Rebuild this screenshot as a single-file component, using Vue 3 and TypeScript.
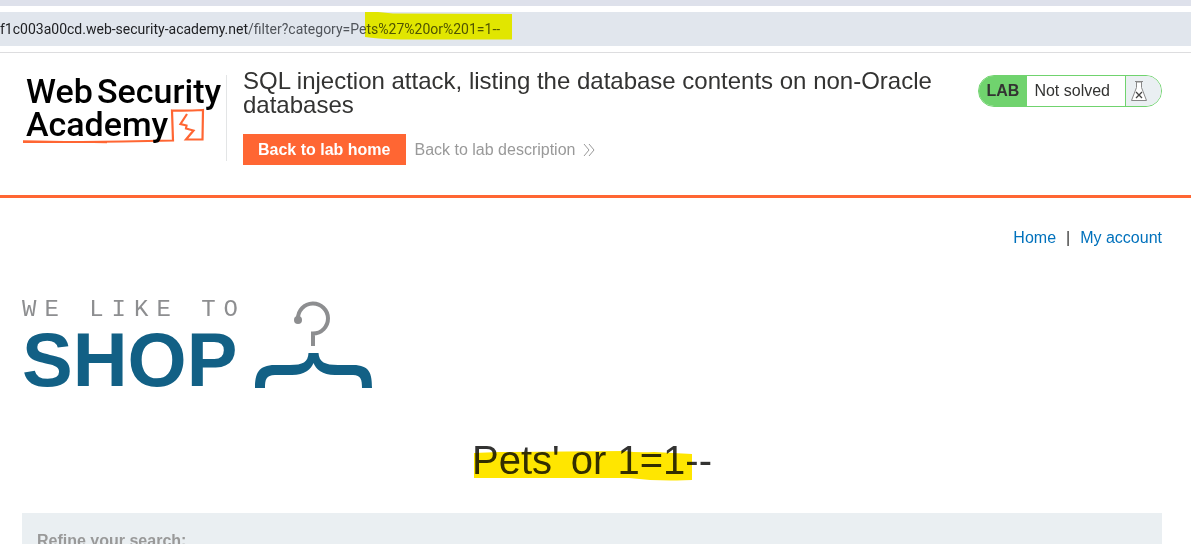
<script setup lang="ts">
const host = 'f1c003a00cd.web-security-academy.net'
const path = '/filter?category=Pet'
const injected = 's%27%20or%201=1--'
const title = 'SQL injection attack, listing the database contents on non-Oracle databases'
const status = 'Not solved'
</script>

<template>
  <div class="window">
    <div class="chrome">
      <div class="address">
        <span class="host">{{ host }}</span><span>{{ path }}</span><span class="marked">{{ injected }}<svg class="url-marker" viewBox="0 0 147 28" width="147" height="28" aria-hidden="true"><path d="M0 0L13 0L28 1.5L147 2V27.500L36 27.500Q16 27 0 25Z" fill="#ff0" /></svg></span>
      </div>
    </div>

    <header class="lab-header">
      <a class="logo" href="#" aria-label="Web Security Academy">
        <svg viewBox="0 0 204 86" width="204" height="86">
          <path d="M1 67L60 67L100 66.500L151 65.500L150 35.500Q165 36 181 35L180.500 64.500L164 64.500L171.500 55.500L164 53.500L164.500 50.500L158.500 49L165 39" fill="none" stroke="#ff6633" stroke-width="2.200" />
          <path d="M1 66L85 67.500" fill="none" stroke="#ff6633" stroke-width="1.500" />
          <g class="logo-text">
            <text x="4" y="28">Web</text>
            <text x="75" y="28">Security</text>
            <text x="4" y="61">Academy</text>
          </g>
        </svg>
      </a>
      <div class="title-block">
        <h2>{{ title }}</h2>
        <div class="actions">
          <a class="primary" href="#">Back to lab home</a>
          <a class="secondary" href="#">
            Back to lab description
            <svg viewBox="0 0 12 14" width="12" height="14" aria-hidden="true"><path d="M1 1L6 7L1 13M6 1L11 7L6 13" fill="none" stroke="#999" stroke-width="1" /></svg>
          </a>
        </div>
      </div>
      <div class="lab-status">
        <span class="tag">LAB</span>
        <span class="state">{{ status }}</span>
        <span class="flask">
          <svg viewBox="0 0 18 22" width="18" height="22" aria-hidden="true">
            <path d="M6.500 2V7.500L1.500 20.500H16.500L11.500 7.500V2Z" fill="#fff" stroke="#888" />
            <path d="M5 1.500H13" stroke="#888" />
            <path d="M6 12L12 18M12 12L6 18" stroke="#444" stroke-width="1.300" />
          </svg>
        </span>
      </div>
    </header>

    <main>
      <nav>
        <a href="#">Home</a><span>|</span><a href="#">My account</a>
      </nav>
      <div class="shop-logo">
        <div class="words">
          <span class="tagline">WE LIKE TO</span>
          <span class="shop">SHOP</span>
        </div>
        <svg viewBox="0 0 118 90" width="118" height="90" aria-hidden="true">
          <path d="M43 19A15 15 0 1 1 58 33.500V46" fill="none" stroke="#8d8e90" stroke-width="4" />
          <circle cx="43" cy="20" r="4" fill="#8d8e90" />
          <path d="M0 88C0 74 3 65 20 65H35C48 65 53 62 53.500 53H63.500C64 62 70 65 83 65H98C115 65 117 74 117 88H107C107 80 106 75 98 75H80C67 75 61 69 58.500 63C56 69 50 75 37 75H20C11 75 10 80 10 88Z" fill="#126085" />
        </svg>
      </div>
      <h1>
        <span class="marked">Pets' or 1=1--<svg class="title-marker" viewBox="0 0 218 30" width="218" height="30" aria-hidden="true"><path d="M0 2L25 1L150 0Q164 2 180 1L218 3V29L203 29.500Q180 30 155 27L0 27Z" fill="#ffe600" /></svg></span>
      </h1>
      <section class="filters">
        <span>Refine your search:</span>
      </section>
    </main>
  </div>
</template>

<style>
body {
  margin: 0;
  background: #fff;
}
</style>

<style scoped>
.window {
  height: 100vh;
  overflow: hidden;
  font-family: "Liberation Sans", Arial, sans-serif;
  font-size: 16px;
  color: #333332;
}
a {
  text-decoration: none;
}
.chrome {
  border-top: 6px solid #dee1eb;
  border-bottom: 1px solid #dddddf;
  padding: 6px 0;
}
.address {
  height: 34px;
  line-height: 34px;
  background: #e1e6ed;
  font-family: Roboto, "Open Sans", sans-serif;
  font-size: 14px;
  color: #50545a;
  white-space: nowrap;
}
.host {
  color: #202124;
}
.marked {
  position: relative;
  display: inline-block;
}
.marked svg {
  position: absolute;
  mix-blend-mode: multiply;
}
.url-marker {
  left: -6px;
  top: 0;
}
.title-marker {
  left: 2px;
  top: 15px;
}
.lab-header {
  display: flex;
  align-items: flex-start;
  padding: 16px 29px 30px 22px;
  border-bottom: 3px solid #ff6633;
}
.logo {
  margin-top: 6px;
  border-right: 1px solid #e3e5e6;
  display: block;
}
.logo svg {
  display: block;
}
.logo-text {
  font-family: Roboto, sans-serif;
  font-size: 34px;
  font-weight: 500;
  fill: #000;
}
.title-block {
  flex: 1;
  padding-left: 16px;
}
h2 {
  margin: 0;
  max-width: 700px;
  font-size: 24px;
  line-height: 24px;
  font-weight: 400;
}
.actions {
  display: flex;
  align-items: center;
  gap: 8px;
  margin-top: 17px;
}
.primary {
  padding: 0 16px 0 15px;
  line-height: 31px;
  font-weight: 700;
  color: #fff;
  background: #ff6633;
}
.secondary {
  display: flex;
  align-items: center;
  gap: 8px;
  color: #999;
}
.lab-status {
  display: flex;
  margin-top: 6px;
  height: 30px;
  line-height: 30px;
  border: 1px solid #70d36e;
  border-radius: 16px;
  overflow: hidden;
}
.tag {
  padding: 0 8px;
  font-weight: 700;
  background: #70d36e;
}
.state {
  padding: 0 15px 0 7px;
}
.flask {
  display: flex;
  align-items: center;
  padding: 0 13px 0 4px;
  background: #eaeff2;
  border-left: 1px solid #70d36e;
}
main {
  padding: 30px 29px 0 22px;
}
nav {
  display: flex;
  justify-content: flex-end;
  gap: 10px;
  line-height: 20px;
}
nav a {
  color: #0071bc;
}
.shop-logo {
  display: flex;
  margin-top: 52px;
  height: 92px;
  gap: 17px;
}
.words {
  display: flex;
  flex-direction: column;
  width: 216px;
  white-space: nowrap;
}
.tagline {
  font-family: "Liberation Mono", monospace;
  font-size: 24px;
  line-height: 20px;
  letter-spacing: 8px;
  color: #8d8e90;
}
.shop {
  font-size: 76px;
  line-height: 80px;
  font-weight: 700;
  color: #126085;
}
h1 {
  margin: 44px 0 0;
  text-align: center;
  font-size: 40px;
  line-height: 48px;
  font-weight: 400;
}
.filters {
  margin-top: 29px;
  padding: 16px 15px;
  background: #eaeff2;
  color: #999;
  font-weight: 700;
  line-height: 24px;
}
</style>
